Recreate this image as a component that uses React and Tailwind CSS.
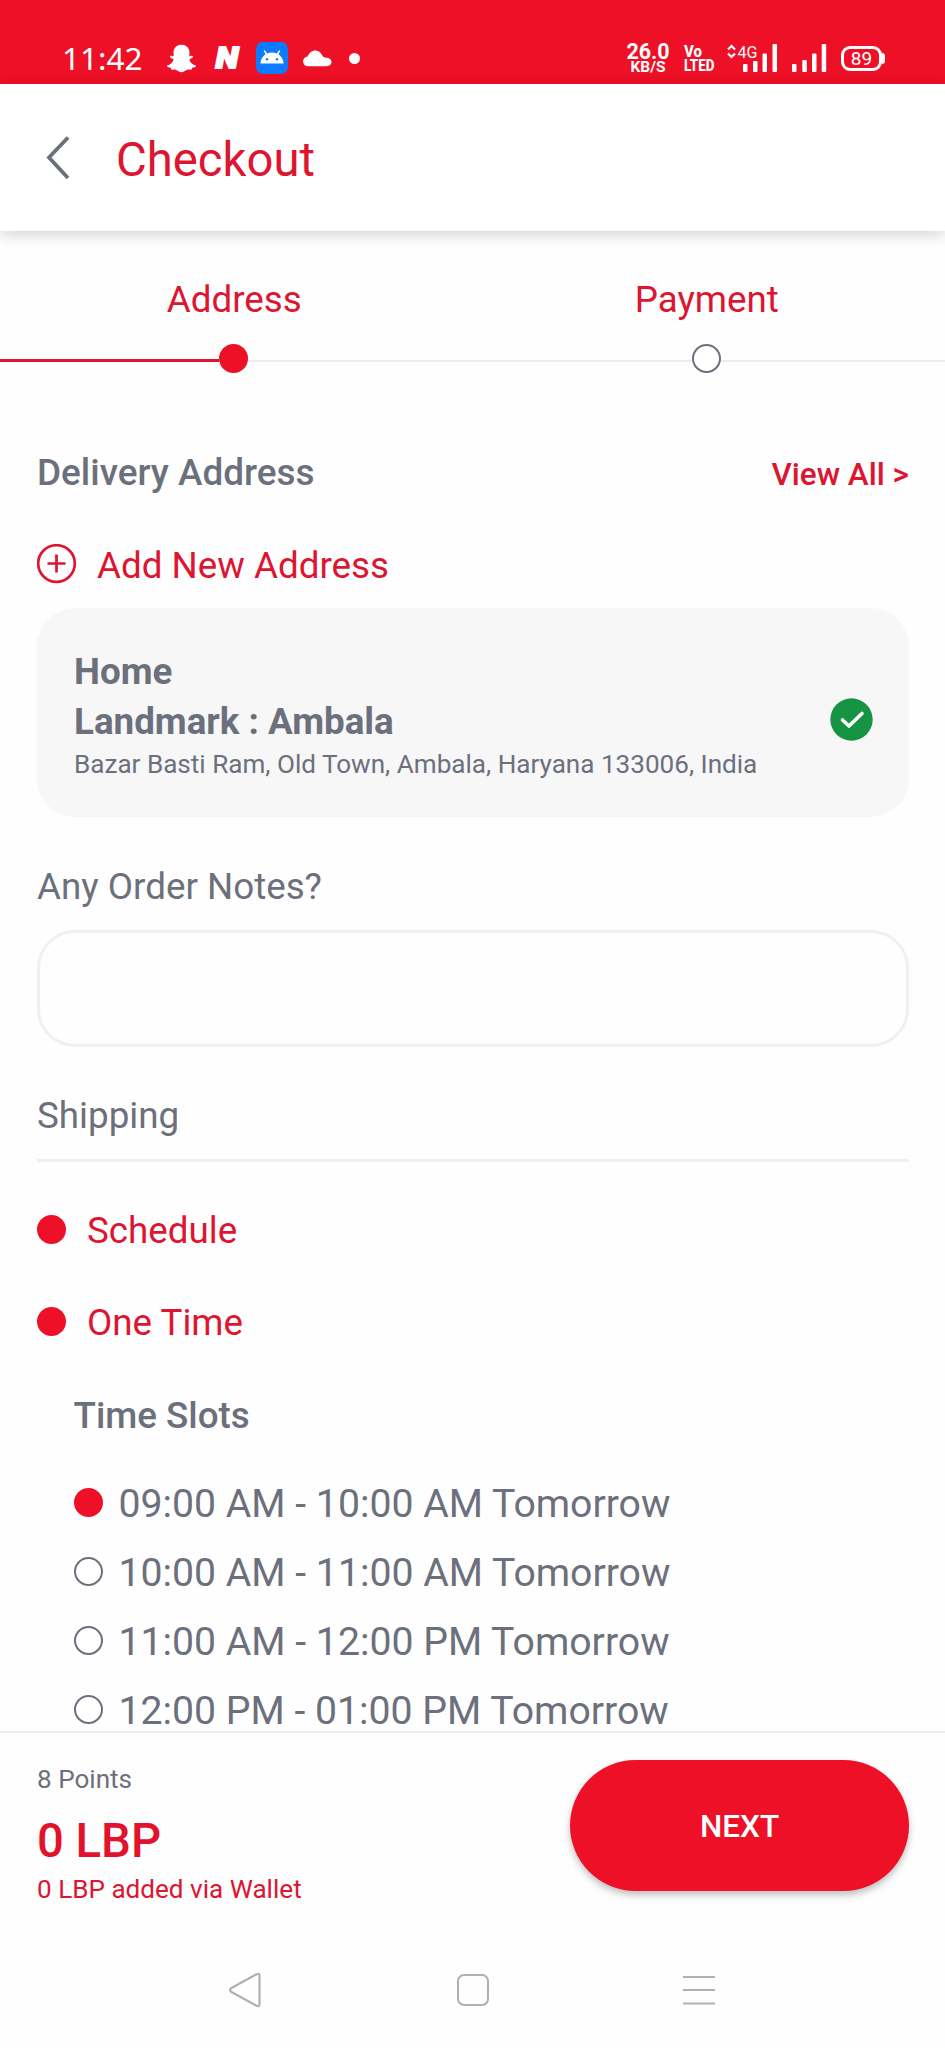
import React, { useState } from "react";
import { FaSnapchatGhost } from "react-icons/fa";

const steps = ["Address", "Payment"];

const timeSlots = [
  "09:00 AM - 10:00 AM Tomorrow",
  "10:00 AM - 11:00 AM Tomorrow",
  "11:00 AM - 12:00 PM Tomorrow",
  "12:00 PM - 01:00 PM Tomorrow",
];

// Signal strength bars, bottom aligned
const SignalBars = () => (
  <svg width="35" height="28" viewBox="0 0 35 28" fill="currentColor">
    <rect x="0" y="20" width="4.5" height="8" rx="1" />
    <rect x="10.3" y="16" width="4.5" height="12" rx="1" />
    <rect x="20" y="9.5" width="4.5" height="18.5" rx="1" />
    <rect x="29.7" y="0" width="4.5" height="28" rx="1" />
  </svg>
);

const StatusBar = () => (
  <div className="flex h-[84px] shrink-0 items-center justify-between bg-[#ed1027] pl-[62px] pr-[60px] pt-[32px] text-white">
    <div className="flex items-center">
      <span className="w-[105px] font-['Noto_Sans',sans-serif] text-[31.5px] leading-[40px]">11:42</span>
      <FaSnapchatGhost className="h-[29px] w-[29px]" />
      <span className="ml-[16px] w-[30px] scale-x-110 text-center text-[30px] font-black italic leading-[40px] [-webkit-text-stroke:2px_white]">N</span>
      {/* Android app badge */}
      <svg className="ml-[14px]" width="32" height="32" viewBox="0 0 32 32">
        <rect width="32" height="32" rx="7" fill="#0b7bff" />
        <path d="M4.5 21.5a11.5 11 0 0 1 23 0z" fill="#fff" />
        <path d="M8.5 9l3 4.5M23.5 9l-3 4.5" stroke="#fff" strokeWidth="1.4" strokeLinecap="round" />
        <circle cx="11" cy="17.3" r="1.2" fill="#0b7bff" />
        <circle cx="21" cy="17.3" r="1.2" fill="#0b7bff" />
      </svg>
      <svg className="ml-[15px]" width="29" height="17" viewBox="0 0 29 17" fill="currentColor">
        <path d="M5 16.2a4.8 4.8 0 0 1-.4-9.6C6 2.8 9 .6 12.2.6c3 0 5.3 1.6 6.8 4.4 1 1.9 2.3 2.7 4.2 2.7 3.2 0 5.3 1.8 5.3 4.4 0 2.5-2 4.1-4.7 4.1z" />
      </svg>
      <span className="ml-[17px] h-[11px] w-[11px] rounded-full bg-white" />
    </div>

    <div className="flex items-center">
      <div className="flex w-[44px] flex-col items-center font-bold">
        <span className="text-[21.5px] leading-[18px]">26.0</span>
        <span className="text-[15.5px] leading-[13px]">KB/S</span>
      </div>
      {/* VoLTE indicator */}
      <svg className="ml-[14px] mr-[12px] overflow-visible" width="31" height="28" viewBox="0 0 31 28" fill="currentColor" fontSize="16.5" fontWeight="800">
        <text x="0" y="13" textLength="18" lengthAdjust="spacingAndGlyphs">Vo</text>
        <text x="0" y="27" textLength="30.5" lengthAdjust="spacingAndGlyphs">LTED</text>
      </svg>
      {/* 4G label with its bars */}
      <svg className="overflow-visible" width="51" height="28" viewBox="0 0 51 28" fill="currentColor">
        <path d="M1 5.5l3.5-3.5L8 5.5M1 9.5l3.5 3.5L8 9.5" fill="none" stroke="currentColor" strokeWidth="2.2" />
        <text x="10.5" y="13.5" fontSize="17" textLength="20" lengthAdjust="spacingAndGlyphs">4G</text>
        <rect x="16" y="20" width="4.5" height="8" rx="1" />
        <rect x="26" y="17" width="4.5" height="11" rx="1" />
        <rect x="35.5" y="9.5" width="4.5" height="18.5" rx="1" />
        <rect x="45.5" y="0" width="4.5" height="28" rx="1" />
      </svg>
      <span className="ml-[14px]">
        <SignalBars />
      </span>
      <div className="ml-[14px] flex items-center">
        <span className="flex h-[25px] w-[41px] items-center justify-center rounded-[9px] border-3 border-white text-[19px] leading-none">89</span>
        <span className="h-[11px] w-[3px] rounded-r bg-white" />
      </div>
    </div>
  </div>
);

const Header = () => (
  <header className="z-10 flex h-[147px] shrink-0 items-center bg-white pl-[46px] shadow-[0_4px_14px_rgba(0,0,0,0.17)]">
    <svg className="text-[#6c707c]" width="24" height="44" viewBox="0 0 24 44" fill="none" stroke="currentColor" strokeWidth="3.8">
      <path d="M22 1.5L3 21.5L22 42" />
    </svg>
    <h1 className="ml-[46px] pt-[5px] text-[47.25px] leading-[56px] text-[#dd1530]">Checkout</h1>
  </header>
);

const Radio = ({ checked }) => (
  <span
    className={
      checked
        ? "h-[29px] w-[29px] shrink-0 rounded-full bg-[#ed1027]"
        : "h-[29px] w-[29px] shrink-0 rounded-full border-2 border-[#6c707c] bg-white"
    }
  />
);

const Stepper = () => (
  <div className="flex h-[157px] pt-[44px]">
    {steps.map((step, i) => (
      <div key={step} className="flex w-1/2 flex-col">
        <span className="pr-[4px] text-center text-[36.75px] leading-[50px] text-[#dd1530]">{step}</span>
        <div className="mt-[19px] flex items-center">
          <span className={i === 0 ? "mt-[4px] h-[3px] w-[219px] bg-[#dd1530]" : "mt-[4px] h-[2px] w-[219px] bg-[#ececee]"} />
          <Radio checked={i === 0} />
          <span className="mt-[4px] h-[2px] flex-1 bg-[#ececee]" />
        </div>
      </div>
    ))}
  </div>
);

const BottomBar = () => (
  <footer className="flex h-[216px] shrink-0 items-start justify-between border-t-2 border-[#ededef] pl-[37px] pr-[36px]">
    <div className="flex flex-col pt-[28px]">
      <span className="text-[26.1px] leading-[36px] text-[#6c707c]">8 Points</span>
      <span className="mt-[15px] text-[47.25px] font-medium leading-[58px] text-[#e3122c]">0 LBP</span>
      <span className="mt-[1px] text-[26.1px] leading-[36px] text-[#dd1530]">0 LBP added via Wallet</span>
    </div>
    <button className="mt-[27px] h-[131px] w-[339px] rounded-full bg-[#ed1027] pt-[2px] text-[31.5px] font-medium text-white shadow-[0_4px_7px_rgba(0,0,0,0.25)]">
      NEXT
    </button>
  </footer>
);

// Android navigation buttons
const NavBar = () => (
  <nav className="flex h-[101px] shrink-0 items-start justify-between pl-[228px] pr-[230px] pt-[25px] text-[#b0b0b0]">
    <svg width="34" height="36" viewBox="0 0 34 36" fill="none" stroke="currentColor" strokeWidth="2.2" strokeLinejoin="round">
      <path d="M28.5 2.2Q31.5 1 31.5 4V32Q31.5 35 28.5 33.7L3.5 20Q.5 18 3.5 16z" />
    </svg>
    <span className="mt-[2px] h-[32px] w-[32px] rounded-[7px] border-2 border-[#b0b0b0]" />
    <svg width="32" height="36" viewBox="0 0 32 36" stroke="currentColor" strokeWidth="2.2">
      <path d="M0 5h32M0 18h32M0 31.5h32" />
    </svg>
  </nav>
);

const App = () => {
  const [selectedSlot, setSelectedSlot] = useState(0);

  return (
    <div className="flex h-[2048px] w-[945px] flex-col overflow-hidden bg-[#fefefe] font-[Roboto,sans-serif]">
      <StatusBar />
      <Header />

      <main className="min-h-0 flex-1 overflow-hidden">
        <Stepper />

        {/* Delivery Address */}
        <section className="pl-[37px] pr-[36px] pt-[60px]">
          <div className="flex items-center justify-between">
            <h2 className="text-[36.9px] font-medium leading-[50px] text-[#6c707c]">Delivery Address</h2>
            <a className="pt-[4px] text-[31.5px] font-medium leading-[46px] text-[#dd1530]">View All &gt;</a>
          </div>

          <div className="mt-[39px] flex items-center text-[#dd1530]">
            <svg width="40" height="40" viewBox="0 0 40 40" fill="none" stroke="currentColor" strokeWidth="2.7">
              <circle cx="19.5" cy="19.5" r="18.3" />
              <path d="M19.5 10.5v18M10.5 19.5h18" />
            </svg>
            <span className="ml-[20px] pt-[4px] text-[36.75px] leading-[49px]">Add New Address</span>
          </div>

          <div className="mt-[18px] flex h-[209px] items-center justify-between rounded-[38px] bg-[#f7f7f7] pl-[37px] pr-[36px] text-[#6c707c]">
            <div className="flex flex-col pt-[4px]">
              <span className="text-[36.75px] font-bold leading-[50px]">Home</span>
              <span className="text-[36.75px] font-bold leading-[50px]">Landmark : Ambala</span>
              <span className="text-[26.1px] leading-[35px]">Bazar Basti Ram, Old Town, Ambala, Haryana 133006, India</span>
            </div>
            <svg className="mt-[13px]" width="43" height="43" viewBox="0 0 43 43" fill="none">
              <circle cx="21.5" cy="21.5" r="21.2" fill="#169443" />
              <path d="M12.5 22L19 28L32 15.5" stroke="#fff" strokeWidth="3.6" strokeLinecap="round" strokeLinejoin="round" />
            </svg>
          </div>
        </section>

        {/* Order notes */}
        <section className="pl-[37px] pr-[36px] pt-[45px]">
          <h2 className="text-[36.75px] leading-[50px] text-[#6c707c]">Any Order Notes?</h2>
          <input className="mt-[18px] block h-[117px] w-full rounded-[38px] border-[3px] border-[#f0f0f1] px-8 text-[36px] outline-none" />
        </section>

        {/* Shipping */}
        <section className="pl-[37px] pr-[36px] pt-[44px] text-[#6c707c]">
          <h2 className="border-b-[3px] border-[#f0f0f1] pb-[18px] text-[36.75px] leading-[50px]">Shipping</h2>

          <div className="mt-[42px] flex items-center text-[#dd1530]">
            <Radio checked />
            <span className="ml-[21px] pt-[4px] text-[36.75px] leading-[46px]">Schedule</span>
          </div>
          <div className="mt-[42px] flex items-center text-[#dd1530]">
            <Radio checked />
            <span className="ml-[21px] pt-[4px] text-[36.75px] leading-[46px]">One Time</span>
          </div>

          <div className="pl-[36.5px] pt-[45px]">
            <h3 className="text-[36.75px] font-medium leading-[50px]">Time Slots</h3>
            <div className="mt-[27px] flex flex-col">
              {timeSlots.map((slot, i) => (
                <div key={slot} onClick={() => setSelectedSlot(i)} className="flex h-[69px] items-center">
                  <Radio checked={selectedSlot === i} />
                  <span className="ml-[16px] pt-[3px] text-[39.2px] leading-[48px]">{slot}</span>
                </div>
              ))}
            </div>
          </div>
        </section>
      </main>

      <BottomBar />
      <NavBar />
    </div>
  );
};

export default App;
